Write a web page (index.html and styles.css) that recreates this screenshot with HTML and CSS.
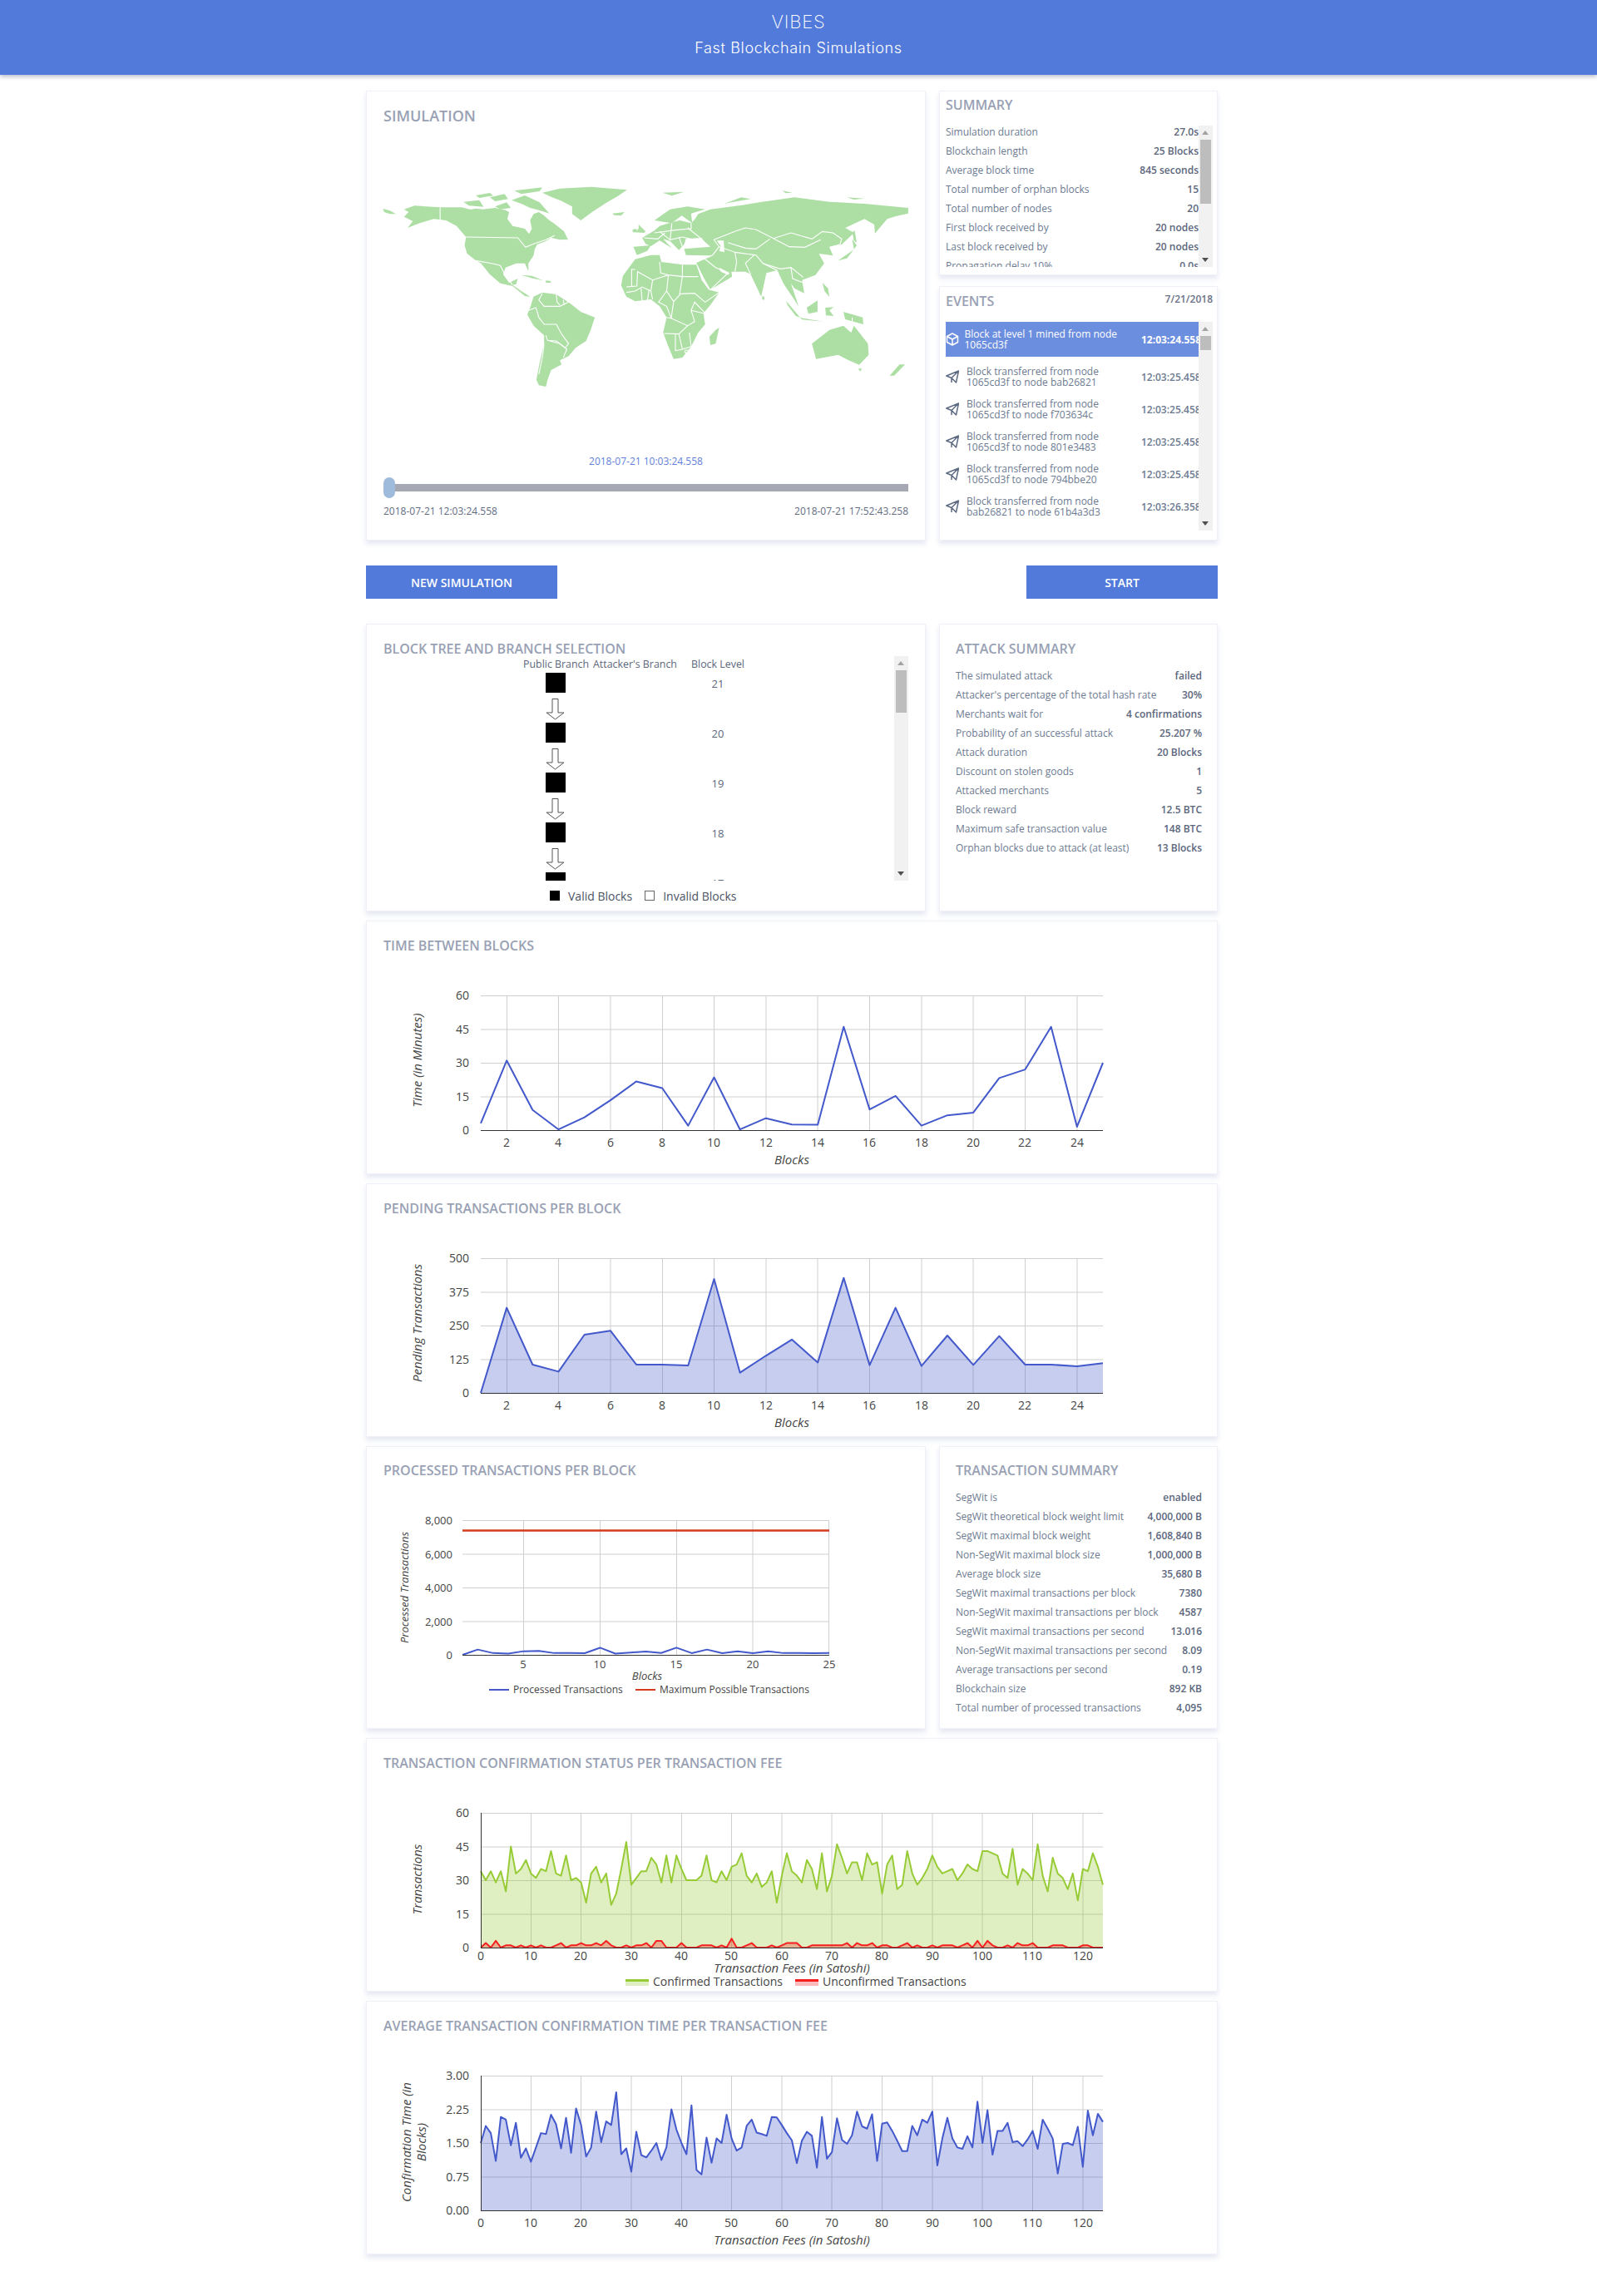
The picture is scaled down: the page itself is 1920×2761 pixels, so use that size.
FILE: index.html
```html
<!DOCTYPE html>
<html lang="en">
<head>
<meta charset="utf-8">
<title>VIBES</title>
<link rel="stylesheet" href="styles.css">
</head>
<body>
<header class="topbar">
  <div class="brand">VIBES</div>
  <div class="tagline">Fast Blockchain Simulations</div>
</header>
<main class="page">
  <section class="split top-split">
    <div class="card sim-card">
      <h2 class="big-title">SIMULATION</h2>
      <svg class="world" viewBox="0 0 1568 870" preserveAspectRatio="none">
        <g class="land">
          <polygon points="25,153 45,160 62,172 45,172 28,165"/>
          <polygon points="85,155 115,142 188,148 250,148 275,156 290,152 310,155 345,150 375,158 385,165 380,190 395,215 430,225 442,244 450,225 445,195 455,172 470,165 485,178 500,195 512,205 542,235 553,264 530,265 505,258 490,270 465,282 458,300 455,322 440,350 440,378 430,350 405,350 375,365 368,390 385,420 410,405 405,425 395,428 420,450 445,470 430,468 395,432 360,422 330,390 305,350 290,340 265,315 258,285 262,255 235,215 205,195 170,190 130,205 95,222 110,198 85,182 98,165"/>
          <polygon points="480,95 530,80 620,74 722,85 695,108 665,130 622,165 590,195 565,172 565,145 535,125 505,110"/>
          <polygon points="255,128 300,122 312,146 270,142"/>
          <polygon points="330,112 372,100 382,118 345,126"/>
          <polygon points="392,122 430,105 472,130 500,170 470,158 445,150 420,135"/>
          <polygon points="400,88 480,76 472,90 420,100"/>
          <polygon points="290,105 330,96 340,106 300,114"/>
          <polygon points="345,145 378,130 390,150 360,155"/>
          <polygon points="525,250 548,252 553,265 530,262"/>
          <polygon points="680,170 715,165 705,178 685,176"/>
          <polygon points="420,392 450,395 482,412 455,405"/>
          <polygon points="490,412 505,414 503,420 490,420"/>
          <polygon points="823,95 885,92 850,106"/>
          <polygon points="1000,135 1048,112 1075,118 1020,130"/>
          <polygon points="1165,88 1195,95 1175,97"/>
          <polygon points="1350,112 1400,116 1370,120"/>
          <polygon points="455,470 480,455 520,462 560,495 590,525 630,545 618,590 605,630 575,655 555,685 530,700 535,715 505,735 495,770 490,795 470,790 463,770 472,710 485,640 485,610 455,575 437,535 445,510"/>
          <polygon points="745,335 790,320 815,320 820,345 880,355 920,355 935,410 955,445 985,455 960,500 940,530 945,570 925,600 905,650 880,690 855,695 840,650 825,600 835,545 815,505 790,480 745,487 720,470 705,430 710,395"/>
          <polygon points="975,590 985,582 975,640 960,645 957,615"/>
          <polygon points="740,290 790,285 780,305 750,320"/>
          <polygon points="765,258 800,232 815,215 842,205 872,195 905,205 915,192 925,172 960,155 1050,140 1100,130 1200,112 1300,128 1400,135 1525,150 1525,170 1490,180 1465,190 1430,242 1428,210 1400,190 1345,222 1370,240 1335,282 1300,292 1310,322 1270,315 1285,350 1260,392 1222,410 1228,458 1200,440 1190,422 1212,505 1170,425 1150,375 1120,385 1105,470 1075,390 1060,380 1020,380 1022,398 960,445 940,400 920,348 965,322 950,322 890,320 885,298 960,290 935,262 890,275 870,302 845,270 825,262 850,295 815,268 790,288 775,280"/>
          <polygon points="800,195 845,155 895,145 945,155 905,170 908,205 878,178 850,205 825,200"/>
          <polygon points="755,210 775,235 770,240 745,238 755,225"/>
          <polygon points="738,228 750,226 748,238 738,238"/>
          <polygon points="1365,238 1372,232 1378,275 1370,268"/>
          <polygon points="1325,340 1370,300 1365,262 1378,286 1350,332"/>
          <polygon points="1108,468 1114,470 1114,482 1108,480"/>
          <polygon points="1176,485 1216,545 1204,540 1180,500"/>
          <polygon points="1235,510 1266,484 1266,525 1240,532"/>
          <polygon points="1215,546 1282,560 1222,553"/>
          <polygon points="1288,510 1312,508 1300,520 1312,540 1290,538"/>
          <polygon points="1340,525 1395,545 1397,570 1345,552"/>
          <polygon points="1280,420 1296,440 1300,472 1286,450"/>
          <polygon points="1300,590 1340,575 1362,600 1370,575 1410,640 1412,680 1385,716 1355,700 1325,680 1262,695 1250,640"/>
          <polygon points="1382,730 1393,730 1388,740"/>
          <polygon points="1500,715 1516,715 1485,755 1472,755"/>
        </g>
        <g class="borders">
          <polyline points="188,148 188,195"/>
          <polyline points="262,255 410,258 432,292 455,280 490,265 515,250"/>
          <polyline points="290,340 335,350 360,358 372,388 395,428"/>
          <polyline points="480,458 470,482 485,505 530,505 555,490"/>
          <polyline points="520,462 522,490 530,500"/>
          <polyline points="540,482 542,500"/>
          <polyline points="440,520 462,510 470,545 485,570 520,570 535,605 555,640 545,655 520,630 495,628 490,610"/>
          <polyline points="485,640 480,690 470,750"/>
          <polyline points="495,628 530,640 550,660 540,690"/>
          <polyline points="720,435 750,432 752,380 795,410 840,392 880,398 925,398"/>
          <polyline points="745,372 735,372 735,432"/>
          <polyline points="815,345 818,385 840,392 835,450 855,488 875,460 915,458 945,490 985,455"/>
          <polyline points="880,355 880,398 872,462"/>
          <polyline points="795,410 790,450 795,480"/>
          <polyline points="720,455 745,450 765,435 790,450"/>
          <polyline points="762,440 765,485"/>
          <polyline points="785,445 780,485"/>
          <polyline points="835,450 812,490 835,505 848,548 835,545"/>
          <polyline points="855,488 848,548 895,575 915,560 905,520 915,490 945,530"/>
          <polyline points="905,520 940,530"/>
          <polyline points="828,603 870,605 895,575"/>
          <polyline points="860,605 860,665 880,660 870,605"/>
          <polyline points="900,600 905,650 880,660"/>
          <circle cx="892" cy="668" r="5"/>
          <polyline points="815,235 845,265 880,255 915,265 935,262"/>
          <polyline points="850,205 845,265"/>
          <polyline points="800,240 860,230 905,225 905,205"/>
          <polyline points="770,258 810,262 830,240"/>
          <polyline points="870,255 880,290 905,282"/>
          <polyline points="895,222 935,262"/>
          <polyline points="965,322 985,290 970,265 1030,235 1060,222 1090,228 1140,260 1190,240 1250,262 1280,235 1310,240 1335,262 1330,282 1300,292"/>
          <polyline points="1140,260 1185,290 1230,292 1275,265"/>
          <polyline points="1010,275 1060,295 1090,298 1130,262"/>
          <polyline points="985,290 1030,310 1035,345 1030,380"/>
          <polyline points="1030,310 1090,320 1110,350 1160,370 1190,365 1225,400"/>
          <polyline points="1085,320 1060,350 1075,390"/>
          <polyline points="1110,350 1150,375 1165,420"/>
          <polyline points="1190,365 1195,405 1225,420"/>
          <polyline points="940,330 975,365 1010,385 960,445"/>
          <polyline points="965,322 920,345"/>
          <polyline points="1365,545 1365,570"/>
        </g>
        <polygon class="inland" points="978,268 998,268 1000,310 985,305 990,288"/>
        <polygon class="inland" points="985,365 1015,385 1010,392 990,380"/>
        <polygon class="inland" points="890,262 935,258 945,278 905,285 885,282"/>
      </svg>
      <div class="sim-date">2018-07-21 10:03:24.558</div>
      <div class="slider"><span class="slider-thumb"></span></div>
      <div class="slider-ends"><span>2018-07-21 12:03:24.558</span><span>2018-07-21 17:52:43.258</span></div>
    </div>
    <div class="side">
      <div class="card summary-card">
        <h2 class="title">SUMMARY</h2>
        <div class="scroll summary-scroll">
          <div class="scroll-body summary-body">
            <div class="row"><span>Simulation duration</span><b>27.0s</b></div>
            <div class="row"><span>Blockchain length</span><b>25 Blocks</b></div>
            <div class="row"><span>Average block time</span><b>845 seconds</b></div>
            <div class="row"><span>Total number of orphan blocks</span><b>15</b></div>
            <div class="row"><span>Total number of nodes</span><b>20</b></div>
            <div class="row"><span>First block received by</span><b>20 nodes</b></div>
            <div class="row"><span>Last block received by</span><b>20 nodes</b></div>
            <div class="row"><span>Propagation delay 10%</span><b>0.0s</b></div>
          </div>
          <div class="bar"><i class="up"></i><span class="thumb thumb-summary"></span><i class="down"></i></div>
        </div>
      </div>
      <div class="card events-card">
        <div class="events-head"><h2 class="title">EVENTS</h2><span class="events-date">7/21/2018</span></div>
        <div class="scroll events-scroll">
          <div class="scroll-body">
            <div class="event event-active">
              <svg class="ev-icon" viewBox="0 0 16 16"><path d="M8 1 14.5 4.5V11.5L8 15 1.5 11.5V4.5ZM1.5 4.5 8 8 14.5 4.5M8 8V15"/></svg>
              <div class="ev-text">Block at level 1 mined from node 1065cd3f</div>
              <div class="ev-time">12:03:24.558</div>
            </div>
            <div class="event">
              <svg class="ev-icon" viewBox="0 0 16 16"><path d="M15.5 1 .8 7 7 9.5 12.5 15ZM15.5 1 7 9.5V15"/></svg>
              <div class="ev-text">Block transferred from node 1065cd3f to node bab26821</div>
              <div class="ev-time">12:03:25.458</div>
            </div>
            <div class="event">
              <svg class="ev-icon" viewBox="0 0 16 16"><path d="M15.5 1 .8 7 7 9.5 12.5 15ZM15.5 1 7 9.5V15"/></svg>
              <div class="ev-text">Block transferred from node 1065cd3f to node f703634c</div>
              <div class="ev-time">12:03:25.458</div>
            </div>
            <div class="event">
              <svg class="ev-icon" viewBox="0 0 16 16"><path d="M15.5 1 .8 7 7 9.5 12.5 15ZM15.5 1 7 9.5V15"/></svg>
              <div class="ev-text">Block transferred from node 1065cd3f to node 801e3483</div>
              <div class="ev-time">12:03:25.458</div>
            </div>
            <div class="event">
              <svg class="ev-icon" viewBox="0 0 16 16"><path d="M15.5 1 .8 7 7 9.5 12.5 15ZM15.5 1 7 9.5V15"/></svg>
              <div class="ev-text">Block transferred from node 1065cd3f to node 794bbe20</div>
              <div class="ev-time">12:03:25.458</div>
            </div>
            <div class="event">
              <svg class="ev-icon" viewBox="0 0 16 16"><path d="M15.5 1 .8 7 7 9.5 12.5 15ZM15.5 1 7 9.5V15"/></svg>
              <div class="ev-text">Block transferred from node bab26821 to node 61b4a3d3</div>
              <div class="ev-time">12:03:26.358</div>
            </div>
          </div>
          <div class="bar"><i class="up"></i><span class="thumb thumb-events"></span><i class="down"></i></div>
        </div>
      </div>
    </div>
  </section>

  <section class="actions">
    <button class="btn">NEW SIMULATION</button>
    <button class="btn">START</button>
  </section>

  <div class="stack">
    <section class="split tree-split">
      <div class="card tree-card">
        <h2 class="title tree-title">BLOCK TREE AND BRANCH SELECTION</h2>
        <div class="scroll tree-scroll">
          <div class="scroll-body tree-body">
            <div class="tree-row tree-head"><span>Public Branch</span><span class="attacker">Attacker's Branch</span><span>Block Level</span></div>
            <div class="tree-row"><span class="block"></span><span></span><span class="level">21</span></div>
            <div class="tree-row"><svg class="arrow" viewBox="0 0 23 26"><path d="M8 .5H15V17H22L11.5 25 1 17H8Z"/></svg></div>
            <div class="tree-row"><span class="block"></span><span></span><span class="level">20</span></div>
            <div class="tree-row"><svg class="arrow" viewBox="0 0 23 26"><path d="M8 .5H15V17H22L11.5 25 1 17H8Z"/></svg></div>
            <div class="tree-row"><span class="block"></span><span></span><span class="level">19</span></div>
            <div class="tree-row"><svg class="arrow" viewBox="0 0 23 26"><path d="M8 .5H15V17H22L11.5 25 1 17H8Z"/></svg></div>
            <div class="tree-row"><span class="block"></span><span></span><span class="level">18</span></div>
            <div class="tree-row"><svg class="arrow" viewBox="0 0 23 26"><path d="M8 .5H15V17H22L11.5 25 1 17H8Z"/></svg></div>
            <div class="tree-row"><span class="block"></span><span></span><span class="level">17</span></div>
          </div>
          <div class="bar"><i class="up"></i><span class="thumb thumb-tree"></span><i class="down"></i></div>
        </div>
        <div class="tree-legend"><span class="swatch swatch-on"></span><span class="lg-text">Valid Blocks</span><span class="swatch"></span><span>Invalid Blocks</span></div>
      </div>
      <div class="card info-card">
        <h2 class="title">ATTACK SUMMARY</h2>
        <div class="row"><span>The simulated attack</span><b>failed</b></div>
        <div class="row"><span>Attacker's percentage of the total hash rate</span><b>30%</b></div>
        <div class="row"><span>Merchants wait for</span><b>4 confirmations</b></div>
        <div class="row"><span>Probability of an successful attack</span><b>25.207 %</b></div>
        <div class="row"><span>Attack duration</span><b>20 Blocks</b></div>
        <div class="row"><span>Discount on stolen goods</span><b>1</b></div>
        <div class="row"><span>Attacked merchants</span><b>5</b></div>
        <div class="row"><span>Block reward</span><b>12.5 BTC</b></div>
        <div class="row"><span>Maximum safe transaction value</span><b>148 BTC</b></div>
        <div class="row"><span>Orphan blocks due to attack (at least)</span><b>13 Blocks</b></div>
      </div>
    </section>

    <section class="card chart-card">
      <h2 class="title chart-title">TIME BETWEEN BLOCKS</h2>
      <svg class="chart" viewBox="0 0 1022 238">
        <g class="grid">
          <path d="M137 30.5H885M137 71H885M137 111.500H885M137 152H885"/>
          <path d="M168.500 30V192M230.500 30V192M293 30V192M355.500 30V192M417.500 30V192M480 30V192M542 30V192M604.500 30V192M667 30V192M729 30V192M791.500 30V192M854 30V192"/>
        </g>
        <g transform="translate(137,192) scale(31.167,-2.7)">
          <polyline class="line blue" points="0,3 1,31 2,9 3,0.3 4,5.7 5,13.3 6,21.7 7,18.7 8,2 9,23.5 10,0.3 11,5.3 12,2.5 13,2.4 14,46 15,9.2 16,15.2 17,2 18,6.6 19,7.8 20,23.2 21,27 22,46 23,1.5 24,30"/>
        </g>
        <path class="axis" d="M137 192.500H885"/>
        <g class="tick tick-end"><text x="123" y="35">60</text><text x="123" y="76">45</text><text x="123" y="116">30</text><text x="123" y="157">15</text><text x="123" y="197">0</text></g>
        <g class="tick tick-mid"><text x="168" y="212">2</text><text x="230" y="212">4</text><text x="293" y="212">6</text><text x="355" y="212">8</text><text x="417" y="212">10</text><text x="480" y="212">12</text><text x="542" y="212">14</text><text x="604" y="212">16</text><text x="667" y="212">18</text><text x="729" y="212">20</text><text x="791" y="212">22</text><text x="854" y="212">24</text></g>
        <text class="axis-title" x="511" y="233">Blocks</text>
        <text class="axis-title" transform="translate(66,108) rotate(-90)">Time (in Minutes)</text>
      </svg>
    </section>

    <section class="card chart-card">
      <h2 class="title chart-title">PENDING TRANSACTIONS PER BLOCK</h2>
      <svg class="chart" viewBox="0 0 1022 238">
        <g class="grid">
          <path d="M137 30.5H885M137 71H885M137 111.500H885M137 152H885"/>
          <path d="M168.500 30V192M230.500 30V192M293 30V192M355.500 30V192M417.500 30V192M480 30V192M542 30V192M604.500 30V192M667 30V192M729 30V192M791.500 30V192M854 30V192"/>
        </g>
        <g transform="translate(137,192) scale(31.167,-0.324)">
          <polygon class="area blue-area" points="0,0 1,316 2,105 3,79 4,216 5,231 6,105 7,105 8,102 9,423 10,75 11,138 12,198 13,113 14,427 15,103 16,316 17,100 18,213 19,104 20,211 21,105 22,105 23,99 24,110 24,0"/>
          <polyline class="line blue" points="0,0 1,316 2,105 3,79 4,216 5,231 6,105 7,105 8,102 9,423 10,75 11,138 12,198 13,113 14,427 15,103 16,316 17,100 18,213 19,104 20,211 21,105 22,105 23,99 24,110"/>
        </g>
        <path class="axis" d="M137 192.500H885"/>
        <g class="tick tick-end"><text x="123" y="35">500</text><text x="123" y="76">375</text><text x="123" y="116">250</text><text x="123" y="157">125</text><text x="123" y="197">0</text></g>
        <g class="tick tick-mid"><text x="168" y="212">2</text><text x="230" y="212">4</text><text x="293" y="212">6</text><text x="355" y="212">8</text><text x="417" y="212">10</text><text x="480" y="212">12</text><text x="542" y="212">14</text><text x="604" y="212">16</text><text x="667" y="212">18</text><text x="729" y="212">20</text><text x="791" y="212">22</text><text x="854" y="212">24</text></g>
        <text class="axis-title" x="511" y="233">Blocks</text>
        <text class="axis-title" transform="translate(66,108) rotate(-90)">Pending Transactions</text>
      </svg>
    </section>

    <section class="split proc-split">
      <div class="card proc-card">
        <h2 class="title chart-title proc-title">PROCESSED TRANSACTIONS PER BLOCK</h2>
        <svg class="chart chart-small" viewBox="0 0 671 275">
          <g class="grid">
            <path d="M115 29.500H556M115 70H556M115 110.500H556M115 151H556"/>
            <path d="M188.500 29V191M280.500 29V191M372.500 29V191M464 29V191M555.500 29V191"/>
          </g>
          <g transform="translate(115,191) scale(18.375,-0.02025)">
            <polyline class="line blue" points="0,0 1,316 2,105 3,79 4,216 5,231 6,105 7,105 8,102 9,423 10,75 11,138 12,198 13,113 14,427 15,103 16,316 17,100 18,213 19,104 20,211 21,105 22,105 23,99 24,110"/>
            <polyline class="line red" points="0,7380 24,7380"/>
          </g>
          <path class="axis" d="M115 191.500H556"/>
          <g class="tick tick-end"><text x="103" y="34">8,000</text><text x="103" y="75">6,000</text><text x="103" y="115">4,000</text><text x="103" y="156">2,000</text><text x="103" y="196">0</text></g>
          <g class="tick tick-mid"><text x="188" y="207">5</text><text x="280" y="207">10</text><text x="372" y="207">15</text><text x="464" y="207">20</text><text x="556" y="207">25</text></g>
          <text class="axis-title" x="337" y="221">Blocks</text>
          <text class="axis-title" transform="translate(50,110) rotate(-90)">Processed Transactions</text>
          <path class="line-key blue" d="M147 233H171"/>
          <text class="key" x="176" y="237">Processed Transactions</text>
          <path class="line-key red" d="M323 233H347"/>
          <text class="key" x="352" y="237">Maximum Possible Transactions</text>
        </svg>
      </div>
      <div class="card info-card tx-card">
        <h2 class="title">TRANSACTION SUMMARY</h2>
        <div class="row"><span>SegWit is</span><b>enabled</b></div>
        <div class="row"><span>SegWit theoretical block weight limit</span><b>4,000,000 B</b></div>
        <div class="row"><span>SegWit maximal block weight</span><b>1,608,840 B</b></div>
        <div class="row"><span>Non-SegWit maximal block size</span><b>1,000,000 B</b></div>
        <div class="row"><span>Average block size</span><b>35,680 B</b></div>
        <div class="row"><span>SegWit maximal transactions per block</span><b>7380</b></div>
        <div class="row"><span>Non-SegWit maximal transactions per block</span><b>4587</b></div>
        <div class="row"><span>SegWit maximal transactions per second</span><b>13.016</b></div>
        <div class="row"><span>Non-SegWit maximal transactions per second</span><b>8.09</b></div>
        <div class="row"><span>Average transactions per second</span><b>0.19</b></div>
        <div class="row"><span>Blockchain size</span><b>892 KB</b></div>
        <div class="row"><span>Total number of processed transactions</span><b>4,095</b></div>
      </div>
    </section>

    <section class="card chart-card">
      <h2 class="title chart-title">TRANSACTION CONFIRMATION STATUS PER TRANSACTION FEE</h2>
      <svg class="chart" viewBox="0 0 1022 238">
        <g class="grid">
          <path d="M137 30.5H885M137 71H885M137 111.500H885M137 152H885"/>
          <path d="M197.500 30V192M257.500 30V192M318 30V192M378.500 30V192M438.500 30V192M499 30V192M559 30V192M619.500 30V192M680 30V192M740 30V192M800.500 30V192M861 30V192"/>
        </g>
        <g transform="translate(137,192) scale(6.032,-2.7)">
          <polygon class="area green-area" points="0,0 0,34 1,30 2,34 3,29 4,34 5,25 6,45 7,33 8,35 9,39 10,33 11,31 12,35 13,34 14,43 15,33 16,32 17,41 18,30 19,31 20,29 21,20 22,33 23,36 24,29 25,33 26,19 27,24 28,35 29,47 30,28 31,31 32,34 33,34 34,40 35,37 36,29 37,41 38,29 39,41 40,35 41,30 42,30 43,30 44,32 45,41 46,30 47,29 48,34 49,30 50,36 51,37 52,42 53,32 54,29 55,33 56,27 57,29 58,34 59,20 60,32 61,42 62,34 63,32 64,29 65,39 66,35 67,26 68,42 69,25 70,32 71,46 72,40 73,33 74,38 75,38 76,30 77,42 78,37 79,38 80,24 81,37 82,41 83,26 84,28 85,43 86,33 87,28 88,31 89,35 90,41 91,36 92,33 93,34 94,35 95,30 96,33 97,37 98,35 99,34 100,43 101,43 102,42 103,41 104,33 105,31 106,44 107,28 108,35 109,33 110,30 111,46 112,32 113,25 114,40 115,33 116,31 117,26 118,33 119,21 120,35 121,34 122,42 123,36 124,28 124,0"/>
          <polyline class="line green" points="0,34 1,30 2,34 3,29 4,34 5,25 6,45 7,33 8,35 9,39 10,33 11,31 12,35 13,34 14,43 15,33 16,32 17,41 18,30 19,31 20,29 21,20 22,33 23,36 24,29 25,33 26,19 27,24 28,35 29,47 30,28 31,31 32,34 33,34 34,40 35,37 36,29 37,41 38,29 39,41 40,35 41,30 42,30 43,30 44,32 45,41 46,30 47,29 48,34 49,30 50,36 51,37 52,42 53,32 54,29 55,33 56,27 57,29 58,34 59,20 60,32 61,42 62,34 63,32 64,29 65,39 66,35 67,26 68,42 69,25 70,32 71,46 72,40 73,33 74,38 75,38 76,30 77,42 78,37 79,38 80,24 81,37 82,41 83,26 84,28 85,43 86,33 87,28 88,31 89,35 90,41 91,36 92,33 93,34 94,35 95,30 96,33 97,37 98,35 99,34 100,43 101,43 102,42 103,41 104,33 105,31 106,44 107,28 108,35 109,33 110,30 111,46 112,32 113,25 114,40 115,33 116,31 117,26 118,33 119,21 120,35 121,34 122,42 123,36 124,28"/>
          <polygon class="area red-area" points="0,0 1,2 2,0 3,3 4,0 5,1 6,1 7,0 8,1 9,0 10,1 11,0 12,1 13,0 14,0 15,1 16,2 17,0 18,1 19,1 20,2 21,1 22,1 23,2 24,1 25,3 26,1 27,0 28,0 29,1 30,0 31,1 32,1 33,2 34,0 35,3 36,3 37,0 38,0 39,0 40,2 41,0 42,0 43,0 44,1 45,1 46,1 47,0 48,1 49,0 50,4 51,0 52,0 53,1 54,2 55,0 56,0 57,0 58,1 59,0 60,1 61,2 62,2 63,2 64,0 65,0 66,1 67,1 68,1 69,1 70,1 71,1 72,1 73,2 74,0 75,2 76,1 77,1 78,2 79,0 80,1 81,1 82,0 83,0 84,1 85,2 86,0 87,1 88,0 89,0 90,1 91,0 92,1 93,1 94,1 95,0 96,1 97,2 98,0 99,3 100,0 101,3 102,1 103,0 104,0 105,1 106,0 107,2 108,1 109,1 110,2 111,0 112,0 113,0 114,1 115,1 116,1 117,0 118,0 119,0 120,1 121,1 122,0 124,0"/>
          <polyline class="line redline" points="0,0 1,2 2,0 3,3 4,0 5,1 6,1 7,0 8,1 9,0 10,1 11,0 12,1 13,0 14,0 15,1 16,2 17,0 18,1 19,1 20,2 21,1 22,1 23,2 24,1 25,3 26,1 27,0 28,0 29,1 30,0 31,1 32,1 33,2 34,0 35,3 36,3 37,0 38,0 39,0 40,2 41,0 42,0 43,0 44,1 45,1 46,1 47,0 48,1 49,0 50,4 51,0 52,0 53,1 54,2 55,0 56,0 57,0 58,1 59,0 60,1 61,2 62,2 63,2 64,0 65,0 66,1 67,1 68,1 69,1 70,1 71,1 72,1 73,2 74,0 75,2 76,1 77,1 78,2 79,0 80,1 81,1 82,0 83,0 84,1 85,2 86,0 87,1 88,0 89,0 90,1 91,0 92,1 93,1 94,1 95,0 96,1 97,2 98,0 99,3 100,0 101,3 102,1 103,0 104,0 105,1 106,0 107,2 108,1 109,1 110,2 111,0 112,0 113,0 114,1 115,1 116,1 117,0 118,0 119,0 120,1 121,1 122,0 124,0"/>
        </g>
        <path class="axis" d="M137 192.500H885M137.500 30V192"/>
        <g class="tick tick-end"><text x="123" y="35">60</text><text x="123" y="76">45</text><text x="123" y="116">30</text><text x="123" y="157">15</text><text x="123" y="197">0</text></g>
        <g class="tick tick-mid"><text x="137" y="207">0</text><text x="197" y="207">10</text><text x="257" y="207">20</text><text x="318" y="207">30</text><text x="378" y="207">40</text><text x="438" y="207">50</text><text x="499" y="207">60</text><text x="559" y="207">70</text><text x="619" y="207">80</text><text x="680" y="207">90</text><text x="740" y="207">100</text><text x="800" y="207">110</text><text x="861" y="207">120</text></g>
        <text class="axis-title" x="511" y="222">Transaction Fees (in Satoshi)</text>
        <text class="axis-title" transform="translate(66,110) rotate(-90)">Transactions</text>
        <rect class="key-fill green-key" x="311" y="230" width="28" height="11"/>
        <path class="line-key green" d="M311 231.500H339"/>
        <text class="key" x="344" y="238">Confirmed Transactions</text>
        <rect class="key-fill red-key" x="515" y="230" width="28" height="11"/>
        <path class="line-key redline" d="M515 231.500H543"/>
        <text class="key" x="548" y="238">Unconfirmed Transactions</text>
      </svg>
    </section>

    <section class="card chart-card">
      <h2 class="title chart-title">AVERAGE TRANSACTION CONFIRMATION TIME PER TRANSACTION FEE</h2>
      <svg class="chart" viewBox="0 0 1022 238">
        <g class="grid">
          <path d="M137 30.5H885M137 71H885M137 111.500H885M137 152H885"/>
          <path d="M197.500 30V192M257.500 30V192M318 30V192M378.500 30V192M438.500 30V192M499 30V192M559 30V192M619.500 30V192M680 30V192M740 30V192M800.500 30V192M861 30V192"/>
        </g>
        <g transform="translate(137,192) scale(6.032,-54)">
          <polygon class="area blue-area" points="0,0 0,1.5 1,1.88 2,1.72 3,1.1 4,2.08 5,2.02 6,1.45 7,1.95 8,1.17 9,1.38 10,1.08 11,1.4 12,1.72 13,1.7 14,2.13 15,1.92 16,1.38 17,2.06 18,1.28 19,2.27 20,1.9 21,1.2 22,1.4 23,2.2 24,1.52 25,1.98 26,1.9 27,2.63 28,1.25 29,1.38 30,.86 31,1.75 32,1.23 33,1.18 34,1.33 35,1.5 36,1.12 37,1.4 38,2.25 39,1.8 40,1.5 41,1.25 42,2.34 43,.9 44,.8 45,1.62 46,1.06 47,1.6 48,1.5 49,2.13 50,1.6 51,1.33 52,1.4 53,1.88 54,2.02 55,1.73 56,1.7 57,1.66 58,2.08 59,2.07 60,1.9 61,1.72 62,1.56 63,1.05 64,1.55 65,1.75 66,1.66 67,.95 68,2.08 69,1.15 70,1.3 71,2.05 72,1.57 73,1.48 74,1.67 75,2.2 76,1.87 77,1.82 78,2.14 79,1.1 80,1.93 81,1.96 82,1.77 83,1.55 84,1.32 85,1.32 86,1.88 87,1.67 88,2.02 89,1.95 90,2.2 91,1 92,1.6 93,2.06 94,1.6 95,1.4 96,1.37 97,1.65 98,1.4 99,2.42 100,1.5 101,2.23 102,1.24 103,1.77 104,1.77 105,1.95 106,1.52 107,1.54 108,1.43 109,1.58 110,1.77 111,1.37 112,2.02 113,1.82 114,1.6 115,.82 116,1.48 117,1.5 118,1.45 119,1.86 120,.97 121,2.22 122,1.67 123,2.15 124,1.97 124,0"/>
          <polyline class="line blue" points="0,1.5 1,1.88 2,1.72 3,1.1 4,2.08 5,2.02 6,1.45 7,1.95 8,1.17 9,1.38 10,1.08 11,1.4 12,1.72 13,1.7 14,2.13 15,1.92 16,1.38 17,2.06 18,1.28 19,2.27 20,1.9 21,1.2 22,1.4 23,2.2 24,1.52 25,1.98 26,1.9 27,2.63 28,1.25 29,1.38 30,.86 31,1.75 32,1.23 33,1.18 34,1.33 35,1.5 36,1.12 37,1.4 38,2.25 39,1.8 40,1.5 41,1.25 42,2.34 43,.9 44,.8 45,1.62 46,1.06 47,1.6 48,1.5 49,2.13 50,1.6 51,1.33 52,1.4 53,1.88 54,2.02 55,1.73 56,1.7 57,1.66 58,2.08 59,2.07 60,1.9 61,1.72 62,1.56 63,1.05 64,1.55 65,1.75 66,1.66 67,.95 68,2.08 69,1.15 70,1.3 71,2.05 72,1.57 73,1.48 74,1.67 75,2.2 76,1.87 77,1.82 78,2.14 79,1.1 80,1.93 81,1.96 82,1.77 83,1.55 84,1.32 85,1.32 86,1.88 87,1.67 88,2.02 89,1.95 90,2.2 91,1 92,1.6 93,2.06 94,1.6 95,1.4 96,1.37 97,1.65 98,1.4 99,2.42 100,1.5 101,2.23 102,1.24 103,1.77 104,1.77 105,1.95 106,1.52 107,1.54 108,1.43 109,1.58 110,1.77 111,1.37 112,2.02 113,1.82 114,1.6 115,.82 116,1.48 117,1.5 118,1.45 119,1.86 120,.97 121,2.22 122,1.67 123,2.15 124,1.97"/>
        </g>
        <path class="axis" d="M137 192.500H885M137.500 30V192"/>
        <g class="tick tick-end"><text x="123" y="35">3.00</text><text x="123" y="76">2.25</text><text x="123" y="116">1.50</text><text x="123" y="157">0.75</text><text x="123" y="197">0.00</text></g>
        <g class="tick tick-mid"><text x="137" y="212">0</text><text x="197" y="212">10</text><text x="257" y="212">20</text><text x="318" y="212">30</text><text x="378" y="212">40</text><text x="438" y="212">50</text><text x="499" y="212">60</text><text x="559" y="212">70</text><text x="619" y="212">80</text><text x="680" y="212">90</text><text x="740" y="212">100</text><text x="800" y="212">110</text><text x="861" y="212">120</text></g>
        <text class="axis-title" x="511" y="233">Transaction Fees (in Satoshi)</text>
        <text class="axis-title" transform="translate(53,110) rotate(-90)">Confirmation Time (in</text>
        <text class="axis-title" transform="translate(71,110) rotate(-90)">Blocks)</text>
      </svg>
    </section>
  </div>
</main>
</body>
</html>
```
FILE: styles.css
```css
* { box-sizing: border-box; }
html, body { margin: 0; padding: 0; background: #fff; }
body { font-family: "Open Sans", "Liberation Sans", sans-serif; color: #667389; font-size: 12px; }

.topbar {
  height: 90px; background: #527ada; color: #fff; text-align: center;
  box-shadow: 0 2px 5px rgba(40, 50, 90, .35);
  font-family: Inter, "Open Sans", sans-serif;
  padding-top: 13px;
}
.brand { font-size: 22px; font-weight: 200; line-height: 26px; letter-spacing: .8px; }
.tagline { font-size: 18px; font-weight: 300; line-height: 24px; margin-top: 7px; letter-spacing: .65px; }

.page { width: 1040px; margin-left: 440px; padding: 19px 16px 49px 0; }
.split { display: grid; grid-template-columns: 673px 335px; column-gap: 16px; }
.top-split { height: 541px; }
.card {
  background: #fff; border: 1px solid #eff0f8;
  box-shadow: 0 4px 6px rgba(170, 175, 215, .3);
}
.side { display: flex; flex-direction: column; gap: 13px; }

h2 { margin: 0; font-weight: 600; color: #99a1b4; line-height: 22px; }
.big-title { font-size: 18px; padding: 18px 20px 0; }
.title { font-size: 16px; }

.sim-card { display: flex; flex-direction: column; padding: 0 20px 0 20px; }
.sim-card .big-title { padding-left: 0; }
.world { display: block; width: 660px; height: 290px; margin: 50px 0 0 -11px; flex: none; }
.land { fill: #addfa5; }
.borders { fill: none; stroke: #fff; stroke-width: 1.1; }
.borders > * { vector-effect: non-scaling-stroke; }
.inland { fill: #fff; }
.sim-date { margin-top: 56px; line-height: 18px; text-align: center; color: #5f7fd8; }
.slider { position: relative; height: 25px; margin-top: 10px; display: flex; align-items: center; }
.slider::before { content: ""; display: block; width: 100%; height: 9px; background: #a6a9b3; }
.slider-thumb { position: absolute; left: 0; top: 0; width: 14px; height: 25px; border-radius: 7px; background: #9fbbdc; }
.slider-ends { display: flex; justify-content: space-between; margin-top: 7px; line-height: 18px; color: #636c7f; }

.summary-card { height: 222px; padding: 5px 5px 0 7px; }
.events-card { height: 306px; padding: 6px 5px 0 7px; }
.scroll { display: flex; overflow: hidden; background: #fff; }
.scroll-body { flex: 1; min-width: 0; overflow: hidden; }
.summary-scroll { height: 170px; margin-top: 14px; }
.summary-body { margin-top: -4px; }
.events-scroll { height: 251px; margin-top: 14px; }
.bar { position: relative; flex: none; width: 17px; background: #f1f1f1; }
.up, .down { position: absolute; left: 4px; width: 0; height: 0; border-left: 4px solid transparent; border-right: 4px solid transparent; }
.up { top: 6px; border-bottom: 5px solid #a3a3a3; }
.down { bottom: 6px; border-top: 5px solid #505050; }
.thumb { display: block; margin: 0 2px; background: #bdbdbd; }
.thumb-summary { height: 77px; margin-top: 17px; }
.thumb-events { height: 17px; margin-top: 17px; }
.thumb-tree { height: 51px; margin-top: 17px; }

.row { display: flex; justify-content: space-between; height: 23px; align-items: center; white-space: nowrap; color: #6c7a91; }
.row b { font-weight: 600; color: #5b667c; }

.events-head { display: flex; justify-content: space-between; align-items: flex-start; }
.events-date { font-size: 12px; font-weight: 600; color: #6a7285; line-height: 17px; }
.event {
  display: grid; grid-template-columns: 25px 210px 1fr; align-items: center; height: 39px;
  line-height: 13px; white-space: nowrap; overflow: hidden;
}
.ev-text { white-space: normal; color: #6c7a91; width: 178px; }
.ev-time { font-size: 12px; font-weight: 600; color: #6c7a91; }
.ev-icon { width: 16px; height: 16px; fill: none; stroke: #5d6b82; stroke-width: 1.5; stroke-linejoin: round; display: block; }
.event-active { height: 42px; background: #6c8ede; grid-template-columns: 22.500px 212.500px 1fr; margin-bottom: 4.500px; }
.event-active .ev-text { color: #fff; width: 205px; }
.event-active .ev-time { color: #fff; font-weight: 700; }
.event-active .ev-icon { stroke: #fff; }

.actions { display: flex; justify-content: space-between; margin: 30px 0; }
.btn {
  width: 230px; height: 40px; border: 0; background: #527ada; color: #fff;
  font: 600 14px "Open Sans", sans-serif;
}

.stack { display: flex; flex-direction: column; gap: 11px; }
.tree-split { height: 346px; }
.tree-card { padding: 18px 20px 0 20px; }
.tree-scroll { height: 270px; margin-top: -2px; }
.tree-body { font-size: 12.400px; }
.tree-row { display: grid; grid-template-columns: 78px 110px 92px; height: 30px; padding-left: 168px; line-height: 26px; }
.tree-head { height: 20px; line-height: 20px; white-space: nowrap; }
.tree-head span { color: #5c667c; }
.attacker { padding-left: 6px; }
.tree-head span:last-child { text-align: center; }
.block { display: block; width: 24px; height: 24px; background: #000; margin-left: 27px; }
.level { text-align: center; color: #5c667c; font-size: 13px; }
.arrow { width: 23px; height: 26px; margin: 1px 0 0 27px; fill: #fff; stroke: #555; stroke-width: 1; }
.tree-legend { display: flex; align-items: center; height: 26px; margin-top: 5px; padding-left: 200px; font-size: 14px; color: #4b5364; }
.swatch { width: 12px; height: 12px; border: 1px solid #666; margin-right: 10px; }
.swatch-on { background: #000; border-color: #000; }
.lg-text { margin-right: 15px; }

.info-card { padding: 18px 18px 0 19px; }
.info-card .title { margin-bottom: 10px; }
.tx-card { padding-top: 17px; }

.chart-card { height: 305px; }
.chart-title { padding: 18px 20px 0 20px; margin-bottom: 19px; }
.chart { display: block; width: 1022px; height: 238px; }
.chart-small { width: 671px; height: 275px; }
.proc-split { height: 340px; }
.proc-title { padding-top: 17px; margin-bottom: 20px; }

.grid path { fill: none; stroke: #cfcfcf; stroke-width: 1; }
.axis { fill: none; stroke: #333; stroke-width: 1; }
.line { fill: none; stroke-width: 2; vector-effect: non-scaling-stroke; stroke-linejoin: round; }
.area { stroke: none; opacity: .3; }
.blue { stroke: #4359cb; }
.red { stroke: #d63b1e; stroke-width: 2.500; }
.green { stroke: #97cb36; }
.redline { stroke: #f41f1f; }
.blue-area { fill: #4359cb; }
.green-area { fill: #97cb36; }
.red-area { fill: #f41f1f; }
.line-key { fill: none; stroke-width: 2; }
.line-key.green, .line-key.redline { stroke-width: 3; }
.key-fill { opacity: .3; }
.green-key { fill: #97cb36; }
.red-key { fill: #f41f1f; }
.tick text { font-family: "Open Sans", sans-serif; font-size: 14px; fill: #444; }
.tick-end text { text-anchor: end; }
.tick-mid text { text-anchor: middle; }
.axis-title { font-family: "Open Sans", sans-serif; font-size: 15px; font-style: italic; fill: #444; text-anchor: middle; }
.key { font-family: "Open Sans", sans-serif; font-size: 14px; fill: #444; }
.chart-small .tick text { font-size: 13px; }
.chart-small .axis-title { font-size: 13px; }
.chart-small .key { font-size: 12px; }
```
